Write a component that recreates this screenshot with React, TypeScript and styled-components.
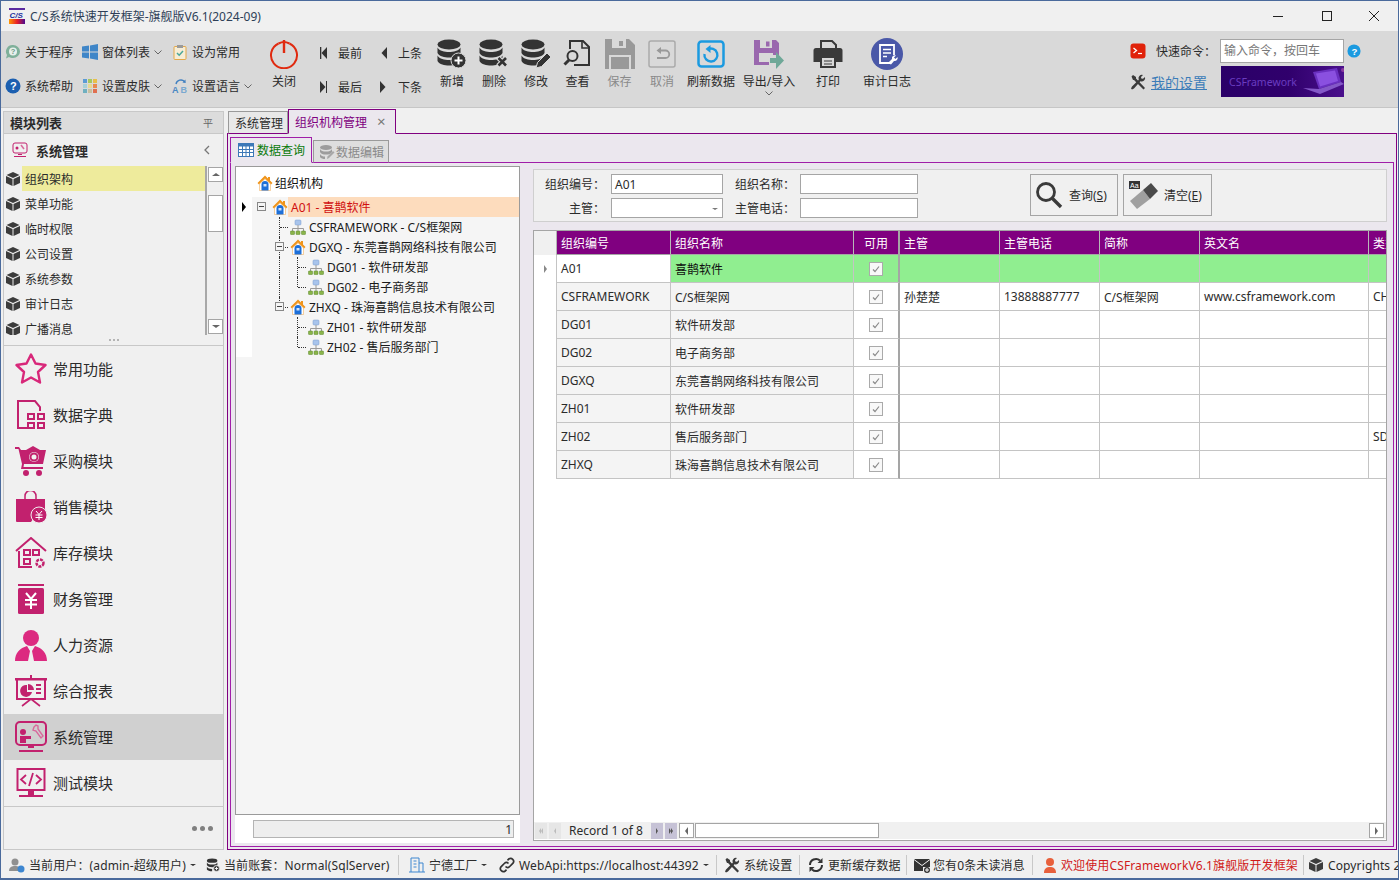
import React from "react";
import styled, { createGlobalStyle } from "styled-components";

const FONT = `"Noto Sans", "Noto Sans CJK SC", sans-serif`;
const PINK = "#c2216e";

const Global = createGlobalStyle`
  html, body { margin: 0; padding: 0; height: 100%; overflow: hidden; background: #f0f0f0; }
  body { font-family: ${FONT}; font-size: 12px; color: #2b2b2b; }
  * { box-sizing: border-box; }
`;

/* ---------- drawing helpers ---------- */
const I = styled.svg<{ $mr?: number }>`
  display: block;
  flex: none;
  margin-right: ${(p) => p.$mr ?? 0}px;
`;
type IP = { s?: number; mr?: number };
const Svg = ({ s = 16, mr, vb = 16, children }: IP & { vb?: number; children: React.ReactNode }) => (
  <I $mr={mr} width={s} height={s} viewBox={`0 0 ${vb} ${vb}`}>{children}</I>
);

const Logo = () => (
  <I width="16" height="16" viewBox="0 0 16 16" $mr={5}>
    <defs>
      <linearGradient id="lg" x1="0" x2="1" y1="0" y2="0">
        <stop offset="0" stopColor="#ff9a00" />
        <stop offset=".5" stopColor="#e8202a" />
        <stop offset="1" stopColor="#4a0a90" />
      </linearGradient>
    </defs>
    <rect x="0" y="0" width="16" height="2" fill="#5a2aa0" />
    <rect x="0" y="11" width="16" height="5" fill="url(#lg)" />
    <text x="0.5" y="10" fontSize="8" fontWeight="700" fontStyle="italic" fontFamily="Liberation Sans" fill="#1b2f9c">C/S</text>
  </I>
);
const BubbleHelp = (p: IP) => (
  <Svg {...p}>
    <path d="M8 1a7 6.500 0 0 1 0 13c-1.500 0-3-.4-4-1l-3 1.500 1-3.500A6.500 6.500 0 0 1 8 1z" fill="#7fb09a" />
    <circle cx="8" cy="7.500" r="4" fill="#e8f0ec" />
    <text x="5.800" y="10.300" fontSize="7.500" fontWeight="700" fill="#6a9a86" fontFamily="Liberation Sans">?</text>
  </Svg>
);
const Win = (p: IP) => (
  <Svg {...p}>
    <path d="M0 2.500 7 1.500v6H0zM8 1.400 16 0v7.500H8zM0 8.500h7v6L0 13.500zM8 8.500h8V16l-8-1.400z" fill="#3f86c8" />
  </Svg>
);
const Clip = (p: IP) => (
  <Svg {...p}>
    <rect x="2" y="2.500" width="12" height="13" rx="1" fill="#f6edd5" stroke="#e3a84a" />
    <rect x="5" y="1" width="6" height="3" fill="#9a9a9a" />
    <path d="m5 9 2.200 2.200L11 7" fill="none" stroke="#4aa79a" strokeWidth="1.500" />
  </Svg>
);
const HelpBlue = ({ c = "#1b5fb0", ...p }: IP & { c?: string }) => (
  <Svg {...p}>
    <circle cx="8" cy="8" r="7.500" fill={c} />
    <text x="5" y="12.300" fontSize="11" fontWeight="700" fill="#fff" fontFamily="Liberation Sans">?</text>
  </Svg>
);
const Skin = (p: IP) => (
  <Svg {...p}>
    {["#5b9bd5", "#a5c860", "#e8c04a", "#a8d0d8", "#e8d890", "#e88a50", "#70b0c0", "#c8c0a0", "#e07050"].map((c, i) => (
      <rect key={c} x={1 + (i % 3) * 5} y={1 + Math.floor(i / 3) * 5} width="4" height="4" fill={c} />
    ))}
  </Svg>
);
const Lang = (p: IP) => (
  <Svg {...p}>
    <path d="M4 6a5 5 0 0 1 8.500-2.500" fill="none" stroke="#3f7fc0" strokeWidth="1.400" />
    <path d="m13.500 1.500.2 3.500-3.300-.5z" fill="#3f7fc0" />
    <text x="0" y="15" fontSize="9" fontWeight="700" fill="#4a88c4" fontFamily="Liberation Sans">A</text>
    <text x="8.500" y="15" fontSize="9" fontWeight="700" fill="#7aa8d0" fontFamily="Liberation Sans">B</text>
  </Svg>
);
const Power = () => (
  <Svg s={30} vb={30}>
    <path d="M9.500 4.500a13 13 0 1 0 11 0" fill="none" stroke="#e02a10" strokeWidth="2" />
    <path d="M15 1v13" stroke="#e02a10" strokeWidth="2.400" />
    <path d="M9.500 4.500C11 3.800 13 3 15 3s4 .8 5.500 1.500" fill="none" stroke="#e02a10" strokeWidth="2" />
  </Svg>
);
const NavArrow = ({ dir, bar }: { dir: "l" | "r"; bar?: boolean }) => (
  <I width="7" height="12" viewBox="0 0 7 12">
    {dir === "l" ? <path d="M7 0v12L1.500 6z" fill="#333" /> : <path d="M0 0v12l5.500-6z" fill="#333" />}
    {bar && <rect x={dir === "l" ? 0 : 6} width="1.300" height="12" fill="#333" />}
  </I>
);
const Db = ({ children }: { children?: React.ReactNode }) => (
  <Svg s={30} vb={30}>
    <ellipse cx="12" cy="5.500" rx="11.500" ry="5" fill="#333" />
    <path d="M.5 8.500c2 3.500 7 4.500 11.500 4.500s9.500-1 11.500-4.500V14c-2 3.500-7 4.500-11.500 4.500S2.500 17.500.5 14z" fill="#333" />
    <path d="M.5 16.500c2 3.500 7 4.500 11.500 4.500s9.500-1 11.500-4.500V22c-2 3.500-7 4.500-11.500 4.500S2.500 25.500.5 22z" fill="#333" />
    {children}
  </Svg>
);
const DbAdd = () => (
  <Db>
    <circle cx="21.500" cy="21.500" r="7.500" fill="#333" stroke="#d9d9d9" />
    <path d="M21.500 17.500v8M17.500 21.500h8" stroke="#fff" strokeWidth="2" />
  </Db>
);
const DbDel = () => (
  <Db>
    <path d="m19 18.500 8.500 8.500M27.500 18.500 19 27" stroke="#d9d9d9" strokeWidth="5" />
    <path d="m19.500 19 7.500 7.500M27 19l-7.500 7.500" stroke="#333" strokeWidth="2.600" />
  </Db>
);
const DbEdit = () => (
  <Db>
    <path d="m15 29 1.500-5.500L26 14l4 4-9.500 9.500z" fill="#333" stroke="#d9d9d9" />
  </Db>
);
const View = () => (
  <Svg s={30} vb={30}>
    <path d="M7 10V2h13l6 6v18H11" fill="none" stroke="#333" strokeWidth="2" />
    <path d="M19 2v7h7" fill="none" stroke="#333" strokeWidth="1.600" />
    <circle cx="9.500" cy="17" r="5" fill="none" stroke="#333" strokeWidth="2" />
    <path d="m6 21-4.500 4.500" stroke="#333" strokeWidth="3" />
  </Svg>
);
const Save = () => (
  <Svg s={30} vb={30}>
    <path d="M0 0h24l6 6v24H0z" fill="#999" />
    <rect x="7" y="0" width="14" height="9" fill="#d9d9d9" />
    <rect x="14" y="2" width="4" height="5" fill="#999" />
    <rect x="4" y="16" width="22" height="14" fill="#d9d9d9" />
    <rect x="6" y="18" width="18" height="12" fill="#999" />
  </Svg>
);
const Undo = () => (
  <Svg s={28} vb={28}>
    <rect x="1" y="1" width="26" height="26" rx="2" fill="none" stroke="#aaa" strokeWidth="1.500" />
    <path d="M10 10.500h7.500a3.500 3.500 0 0 1 0 7.500H9" fill="none" stroke="#999" strokeWidth="1.800" />
    <path d="M13 7v7l-4.500-3.500z" fill="#999" />
  </Svg>
);
const Refresh = () => (
  <Svg s={28} vb={28}>
    <rect x="1.500" y="1.500" width="25" height="25" rx="3" fill="none" stroke="#1b9ae0" strokeWidth="2.500" />
    <path d="M10.500 9.500A6.500 6.500 0 1 1 7.500 14" fill="none" stroke="#1b9ae0" strokeWidth="2.400" />
    <path d="M13.500 5v8l-5-4z" fill="#1b9ae0" />
  </Svg>
);
const Export = () => (
  <Svg s={30} vb={30}>
    <path d="M0 1h22l3 3v12h-6v-2H5v9h10v3H0z" fill="#9a68ae" />
    <rect x="6" y="1" width="12" height="8" fill="#d9d9d9" />
    <rect x="12" y="2.500" width="3.500" height="5" fill="#9a68ae" />
    <path d="M16 19h6v-6l8 8.500-8 8.500v-6h-6z" fill="#6fa898" />
  </Svg>
);
const Printer = () => (
  <Svg s={30} vb={30}>
    <path d="M8 2h11l4 4v6H8z" fill="#d9d9d9" stroke="#3a3a3a" strokeWidth="2" />
    <path d="M3 9h24a2.500 2.500 0 0 1 2.500 2.500V23H23v-6H7v6H.5V11.500A2.500 2.500 0 0 1 3 9z" fill="#3a3a3a" />
    <path d="M8 18h14v10H8z" fill="#d9d9d9" stroke="#3a3a3a" strokeWidth="2" />
    <path d="M11 22h8M11 25h8" stroke="#3a3a3a" />
  </Svg>
);
const Audit = () => (
  <Svg s={32} vb={32}>
    <circle cx="16" cy="16" r="16" fill="#4a58a8" />
    <path d="M20 25H9V7h14v10" fill="none" stroke="#fff" strokeWidth="1.800" />
    <path d="M12 11.500h8M12 15h8M12 18.500h4" stroke="#fff" strokeWidth="1.500" />
    <path d="m17 25 4-4a3 3 0 0 1 4-3.500l-2 2 1.500 1.500 2-2a3 3 0 0 1-3.500 4l-3 3.500z" fill="#fff" />
  </Svg>
);
const Terminal = (p: IP) => (
  <Svg {...p}>
    <rect x=".5" y=".5" width="15" height="15" rx="3" fill="#e0220a" />
    <path d="m3.500 5 3 2.500-3 2.500" fill="none" stroke="#fff" strokeWidth="1.300" />
    <path d="M8 10.500h4" stroke="#fff" strokeWidth="1.200" />
  </Svg>
);
const Tools = ({ c = "#3a3a3a", ...p }: IP & { c?: string }) => (
  <Svg {...p}>
    <path d="m1.500 2.500 1.500-1.500 3 2 0 1.500 9 9.500-1.500 1.500-9.500-9.500H3z" fill={c} />
    <path d="M15 3a3.500 3.500 0 0 1-4.600 4.300L4 14.500 2 15.500l-1-1 1-2 6.800-6.700A3.500 3.500 0 0 1 13 1l-2 2 .3 1.500 1.700.3z" fill={c} />
  </Svg>
);
const Banner = styled.div`
  width: 123px;
  height: 31px;
  display: flex;
  align-items: center;
  justify-content: space-between;
  padding: 0 0 0 8px;
  overflow: hidden;
  color: #6a3cc0;
  font-size: 10.500px;
  background: linear-gradient(90deg, #2a0068 0%, #30006c 55%, #4a108c 100%);
`;
const Laptop = () => (
  <I width="50" height="31" viewBox="0 0 50 31">
    <path d="M16 6 40 2l4 14-22 7z" fill="#6a30c0" />
    <path d="M19 7.500 38 4.500l3 10.500-18 5.500z" fill="#8a50e0" />
    <path d="M6 22l16 1 22-7 3 2-24 10z" fill="#8458c8" />
    <circle cx="46" cy="4" r="2" fill="#8a3aa0" />
  </I>
);

/* sidebar icons */
const Cube = () => (
  <Svg s={14} vb={14}>
    <path d="M7 0 .5 3 7 6l6.500-3z" fill="#3c3c3c" />
    <path d="M0 4v7l6.500 3V7z" fill="#3c3c3c" />
    <path d="M14 4v7l-6.500 3V7z" fill="#3c3c3c" />
  </Svg>
);
const P = { fill: PINK };
const Star = () => (
  <Svg s={32} vb={32}>
    <path d="M16 1.500 20.500 10.500l10 1.500-7.500 7 2 10.500L16 24.500 7 29.500l2-10.500-7.500-7 10-1.500z" fill="none" stroke="#d8287a" strokeWidth="2.400" strokeLinejoin="round" />
  </Svg>
);
const DictIcon = () => (
  <Svg s={32} vb={32}>
    <path d="M12 29H3V2h17l5 6v4" fill="none" stroke={PINK} strokeWidth="2" />
    {[[13, 15], [23, 15], [13, 24], [23, 24]].map(([x, y]) => (
      <rect key={`${x}-${y}`} x={x} y={y} width="6" height="5" fill="none" stroke={PINK} strokeWidth="2" />
    ))}
  </Svg>
);
const Cart = () => (
  <Svg s={32} vb={32}>
    <path d="M0 2h4l2 3h25l-3 14H9l-.5 3H28v2H6l1-5L3.500 4H0z" {...P} />
    <path d="M11 5l7-4 7 4z" {...P} />
    <circle cx="19" cy="12" r="5" fill="#f0f0f0" />
    <circle cx="19" cy="12" r="3.500" fill="none" stroke={PINK} strokeWidth="2" />
    <circle cx="11" cy="28" r="3" {...P} />
    <circle cx="24" cy="28" r="3" {...P} />
  </Svg>
);
const Bag = () => (
  <Svg s={32} vb={32}>
    <path d="M1 8h29v14H22l-6 9H2a1 1 0 0 1-1-1z" {...P} />
    <path d="M10 8V5a5.500 5.500 0 0 1 11 0v3" fill="none" stroke={PINK} strokeWidth="1.500" />
    <circle cx="24" cy="24" r="8" {...P} stroke="#f0f0f0" />
    <path d="m21 20 3 3.500 3-3.500M20.500 24h7M20.500 26.500h7M24 23.500V29" stroke="#fff" fill="none" />
  </Svg>
);
const Store = () => (
  <Svg s={32} vb={32}>
    <path d="M1 14 16 1l15 13" fill="none" stroke={PINK} strokeWidth="2" />
    <path d="M4 14v16h13" fill="none" stroke={PINK} strokeWidth="2" />
    <rect x="9" y="13" width="6" height="5" fill="none" stroke={PINK} strokeWidth="2" />
    <rect x="18" y="13" width="6" height="5" fill="none" stroke={PINK} strokeWidth="2" />
    <rect x="9" y="22" width="6" height="5" fill="none" stroke={PINK} strokeWidth="2" />
    <circle cx="25" cy="26" r="3.500" fill="none" stroke={PINK} strokeWidth="2.500" strokeDasharray="3 1" />
  </Svg>
);
const Finance = () => (
  <Svg s={32} vb={32}>
    <rect x="3" y="1" width="26" height="2" {...P} />
    <rect x="3" y="5" width="26" height="26" rx="1.500" {...P} />
    <path d="m11 10 5 6 5-6M10 17h12M10 21.500h12M16 16v10" fill="none" stroke="#fff" strokeWidth="2" />
  </Svg>
);
const Person = () => (
  <Svg s={32} vb={32}>
    <circle cx="16" cy="9" r="8" fill="#dc2a80" />
    <path d="M0 32c0-8 5-13 12-15l3 5-2 10zM32 32c0-8-5-13-12-15l-3 5 2 10z" fill="#dc2a80" />
  </Svg>
);
const Report = () => (
  <Svg s={32} vb={32}>
    <path d="M15 0h2v3h-2zM0 3h32v2.500H0z" {...P} />
    <path d="M2 5v19h28V5" fill="none" stroke={PINK} strokeWidth="2" />
    <path d="M13 9v6h6a6 6 0 0 0-6-6zM12 10a6 6 0 1 0 5 7h-5z" {...P} />
    <path d="M21 10h5M21 14h5M21 18h5" stroke={PINK} strokeWidth="2" />
    <path d="m16 24-9 7M16 24l9 7" stroke={PINK} strokeWidth="1.600" />
  </Svg>
);
const SysAdmin = () => (
  <Svg s={32} vb={32}>
    <rect x="1" y="1" width="30" height="23" rx="4" fill="none" stroke={PINK} strokeWidth="2" />
    <path d="M13 25h6v2h-6zM4 29h24v2H4z" {...P} />
    <circle cx="8" cy="11" r="3" {...P} />
    <path d="M5 15h11v3H11v4H5z" {...P} />
    <path d="m19 6 2-2 2 1v3l5 7-2 2-5-7-3-1z" fill="none" stroke="#d86a9c" strokeWidth="1.400" />
  </Svg>
);
const Code = () => (
  <Svg s={32} vb={32}>
    <rect x="2.500" y="2" width="27" height="21" fill="none" stroke={PINK} strokeWidth="2" />
    <path d="M4 28h24v2H4zM13 24h6v4h-6z" {...P} />
    <path d="m11 8-5 4.500 5 4.500M21 8l5 4.500-5 4.500M18 6l-4 13" fill="none" stroke={PINK} strokeWidth="1.800" />
  </Svg>
);

/* tree icons */
const House = () => (
  <Svg s={16}>
    <path d="M8 .5 .5 8l1.500 1.500L8 3.500l6 6L15.500 8 13 5.500V2h-2v1.500z" fill="#f0941a" />
    <path d="M2.500 9v6.500h11V9L8 4z" fill="#fff" stroke="#f0b060" strokeWidth=".6" />
    <path d="M4.500 15.500V9.500a3.500 3.500 0 0 1 7 0v6z" fill="#1d6fd8" />
    <rect x="6.500" y="9" width="3" height="2.500" fill="#cfe2fa" />
  </Svg>
);
const Org = () => (
  <Svg s={16}>
    <rect x="5" y="1" width="6" height="5" rx="1" fill="#a8c4ec" stroke="#7a9ccc" strokeWidth=".5" />
    <path d="M8 6v3M2.500 12V9.500h11V12M8 9v3" stroke="#9a9a9a" fill="none" />
    {[0.5, 6, 11.5].map((x) => (
      <rect key={x} x={x} y="12" width="4" height="3.500" rx=".6" fill="#8ab44a" stroke="#5d8a2c" strokeWidth=".5" />
    ))}
  </Svg>
);

/* ---------- window frame ---------- */
const Window = styled.div`
  width: 1399px;
  height: 880px;
  display: flex;
  flex-direction: column;
  border: 1px solid #4a6a9c;
  border-bottom-width: 2px;
  background: #f0f0f0;
  overflow: hidden;
`;
const TitleBar = styled.div`
  height: 30px;
  flex: none;
  display: flex;
  align-items: center;
  padding-left: 8px;
  background: #f0f0f0;
`;
const TitleText = styled.span`
  font-size: 12px;
  color: #2e3f58;
  margin-right: auto;
`;
const WinBtn = styled.div`
  width: 48px;
  height: 30px;
  display: flex;
  align-items: center;
  justify-content: center;
`;
const WinBtns = styled.div`
  display: flex;
`;

/* ---------- toolbar ---------- */
const Toolbar = styled.div`
  height: 77px;
  flex: none;
  display: flex;
  padding: 4px 0 0 4px;
  background: #d9d9d9;
  border-bottom: 1px solid #c6c6c6;
`;
const SmallCol = styled.div<{ $w: number }>`
  width: ${(p) => p.$w}px;
  flex: none;
  display: flex;
  flex-direction: column;
`;
const SmallItem = styled.div`
  height: 34px;
  display: flex;
  align-items: center;
  white-space: nowrap;
  gap: 4px;
  font-size: 12px;
`;
const Chev = styled.svg`
  display: block;
  flex: none;
`;
const Chevron = () => (
  <Chev width="8" height="5" viewBox="0 0 8 5">
    <path d="m.5.5 3.500 3.500L7.500.5" fill="none" stroke="#666" />
  </Chev>
);
const NavCol = styled.div<{ $w: number; $pl: number }>`
  width: ${(p) => p.$w}px;
  padding-left: ${(p) => p.$pl}px;
  flex: none;
  display: flex;
  flex-direction: column;
`;
const NavItem = styled.div`
  height: 34px;
  display: flex;
  align-items: center;
  gap: 11px;
  font-size: 12px;
  padding-top: 1px;
`;
const BigBtn = styled.div<{ $w: number; $off?: boolean }>`
  width: ${(p) => p.$w}px;
  flex: none;
  display: flex;
  flex-direction: column;
  align-items: center;
  color: ${(p) => (p.$off ? "#8a8a8a" : "#2b2b2b")};
  font-size: 12px;
  white-space: nowrap;
`;
const BigIcon = styled.div`
  height: 32px;
  margin-top: 3px;
  display: flex;
  align-items: center;
  justify-content: center;
`;
const BigLabel = styled.div`
  margin-top: 3px;
  line-height: 18px;
`;
const ToolRight = styled.div`
  margin-left: auto;
  width: 268px;
  flex: none;
  display: flex;
  flex-direction: column;
`;
const ToolRightRow = styled.div`
  display: flex;
  align-items: center;
  height: 31px;
`;
const CmdLabel = styled.span`
  width: 64px;
  margin-left: 10px;
  font-size: 12px;
`;
const CmdInput = styled.div`
  width: 124px;
  height: 24px;
  border: 1px solid #a5a5a5;
  background: #fff;
  color: #777;
  font-size: 12px;
  padding-left: 3px;
  line-height: 21px;
  margin-right: 3px;
`;
const MyLink = styled.a`
  color: #3b7cb8;
  font-size: 14px;
  text-decoration: underline;
  margin-left: 5px;
  width: 70px;
  white-space: nowrap;
`;

/* ---------- body ---------- */
const Body = styled.div`
  flex: 1;
  min-height: 0;
  display: flex;
  padding: 3px 0 2px 2px;
`;
const Sidebar = styled.aside`
  width: 221px;
  flex: none;
  display: flex;
  flex-direction: column;
  border: 1px solid #c8c8c8;
  background: #f0f0f0;
`;
const SideHead = styled.div`
  height: 22px;
  flex: none;
  display: flex;
  align-items: center;
  justify-content: space-between;
  padding: 0 10px 0 6px;
  background: #dcdcdc;
  border-bottom: 1px solid #c8c8c8;
  font-size: 13px;
  font-weight: 700;
`;
const Pin = styled.span`
  font-size: 10px;
  font-weight: 400;
  color: #666;
`;
const GroupHead = styled.div`
  height: 32px;
  flex: none;
  display: flex;
  align-items: center;
  padding-left: 8px;
  font-size: 13px;
  font-weight: 700;
`;
const GroupTitle = styled.span`
  margin-left: 8px;
  margin-right: auto;
`;
const ChevBack = styled.svg`
  display: block;
  margin-right: 13px;
`;
const ListWrap = styled.div`
  height: 169px;
  flex: none;
  display: flex;
  overflow: hidden;
`;
const List = styled.div`
  width: 203px;
  flex: none;
  border-right: 2px solid #a8a8a8;
  overflow: hidden;
`;
const ListItem = styled.div`
  height: 25px;
  display: flex;
  align-items: center;
  padding-left: 2px;
  font-size: 12px;
`;
const ListText = styled.span<{ $on?: boolean }>`
  flex: 1;
  align-self: stretch;
  margin-left: 2px;
  padding-left: 3px;
  display: flex;
  align-items: center;
  background: ${(p) => (p.$on ? "#eeeb9c" : "transparent")};
`;
const VScroll = styled.div`
  width: 15px;
  margin-left: 1px;
  flex: none;
  display: flex;
  flex-direction: column;
  padding-top: 1px;
`;
const ScrollBtn = styled.div`
  width: 15px;
  height: 15px;
  flex: none;
  background: #fff;
  border: 1px solid #a5a5a5;
  display: flex;
  align-items: center;
  justify-content: center;
`;
const Tri = styled.div<{ $d: "u" | "d" | "l" | "r"; $c?: string; $s?: number }>`
  width: 0;
  height: 0;
  flex: none;
  ${(p) => {
    const s = p.$s ?? 3;
    const c = p.$c ?? "#666";
    const t = "transparent";
    if (p.$d === "u") return `border-left:${s + 1}px solid ${t};border-right:${s + 1}px solid ${t};border-bottom:${s}px solid ${c};`;
    if (p.$d === "d") return `border-left:${s + 1}px solid ${t};border-right:${s + 1}px solid ${t};border-top:${s}px solid ${c};`;
    if (p.$d === "l") return `border-top:${s + 1}px solid ${t};border-bottom:${s + 1}px solid ${t};border-right:${s}px solid ${c};`;
    return `border-top:${s + 1}px solid ${t};border-bottom:${s + 1}px solid ${t};border-left:${s}px solid ${c};`;
  }}
`;
const VThumb = styled.div`
  width: 15px;
  height: 37px;
  margin-top: 13px;
  margin-bottom: 87px;
  background: #fff;
  border: 1px solid #a5a5a5;
  flex: none;
`;
const Grip = styled.div`
  height: 11px;
  flex: none;
  display: flex;
  justify-content: center;
  align-items: center;
  gap: 2px;
  border-bottom: 1px solid #c8c8c8;
`;
const GripDot = styled.i`
  width: 2px;
  height: 2px;
  background: #b4b4b4;
`;
const NavItemBig = styled.div<{ $on?: boolean }>`
  height: 46px;
  flex: none;
  display: flex;
  align-items: center;
  padding: 0 0 1px 11px;
  gap: 6px;
  font-size: 15px;
  background: ${(p) => (p.$on ? "#d0d0d0" : "transparent")};
`;
const SideFoot = styled.div`
  flex: 1;
  display: flex;
  align-items: center;
  justify-content: flex-end;
  gap: 3px;
  padding-right: 10px;
  border-top: 1px solid #c8c8c8;
`;
const FootDot = styled.i`
  width: 5px;
  height: 5px;
  border-radius: 50%;
  background: #808080;
`;

/* ---------- main ---------- */
const Main = styled.main`
  flex: 1;
  min-width: 0;
  margin-left: 3px;
  margin-right: 1px;
  display: flex;
  flex-direction: column;
`;
const TabStrip = styled.div`
  height: 22px;
  flex: none;
  display: flex;
  align-items: flex-end;
  padding-left: 1px;
  position: relative;
  z-index: 1;
`;
const OuterTab = styled.div<{ $on?: boolean }>`
  height: ${(p) => (p.$on ? 25 : 23)}px;
  display: flex;
  align-items: center;
  padding: 0 ${(p) => (p.$on ? 9 : 4)}px 0 6px;
  margin-bottom: -1px;
  gap: 10px;
  font-size: 12px;
  color: ${(p) => (p.$on ? "#800080" : "#2b2b2b")};
  background: ${(p) => (p.$on ? "#ebe7ee" : "#e8e8e8")};
  border: 1px solid ${(p) => (p.$on ? "#800080" : "#9a9a9a")};
  border-bottom: ${(p) => (p.$on ? "1px solid #ebe7ee" : "1px solid #800080")};
`;
const TabClose = styled.span`
  color: #777;
  font-size: 15px;
  line-height: 15px;
`;
const Page = styled.div`
  flex: 1;
  min-height: 0;
  border: 1px solid #800080;
  padding: 2px;
  background: #ebe7ee;
  display: flex;
  flex-direction: column;
`;
const SubTabs = styled.div`
  height: 26px;
  flex: none;
  display: flex;
  align-items: flex-end;
  position: relative;
  z-index: 1;
`;
const SubTab = styled.div<{ $on?: boolean }>`
  height: ${(p) => (p.$on ? 26 : 23)}px;
  width: ${(p) => (p.$on ? 82 : 76)}px;
  margin-right: 1px;
  margin-bottom: -1px;
  display: flex;
  align-items: center;
  padding-left: ${(p) => (p.$on ? 7 : 5)}px;
  gap: ${(p) => (p.$on ? 3 : 1)}px;
  font-size: 12px;
  color: ${(p) => (p.$on ? "#0a7a0a" : "#8a8a8a")};
  background: ${(p) => (p.$on ? "#ebe7ee" : "#dedede")};
  border: 1px solid ${(p) => (p.$on ? "#a01ea8" : "#9a9a9a")};
  border-bottom: ${(p) => (p.$on ? "1px solid #ebe7ee" : "1px solid #a01ea8")};
`;
const Inner = styled.div`
  flex: 1;
  min-height: 0;
  display: flex;
  gap: 13px;
  border: 1px solid #a01ea8;
  padding: 3px 6px 3px 4px;
`;
const TreeCol = styled.div`
  width: 285px;
  flex: none;
  display: flex;
  flex-direction: column;
  background: #fff;
`;
const TreeBox = styled.div`
  flex: 1;
  min-height: 0;
  border: 1px solid #9a9a9a;
  background: #f5f5f5;
  overflow: hidden;
`;
const TreeRootRow = styled.div`
  height: 30px;
  display: flex;
  align-items: center;
  background: #fff;
  padding: 1px 0 0 21px;
  gap: 2px;
  font-size: 12px;
  color: #111;
`;
const TreeRow = styled.div`
  height: 20px;
  display: flex;
  align-items: center;
  font-size: 12px;
  color: #1a1a1a;
`;
const Strip = styled.div`
  width: 16px;
  align-self: stretch;
  flex: none;
  background: #fff;
  display: flex;
  align-items: center;
  justify-content: center;
`;
const Cell = styled.div<{ $line?: "full" | "half" | "none"; $stub?: boolean }>`
  width: 18px;
  height: 20px;
  flex: none;
  position: relative;
  &::before {
    content: "";
    position: absolute;
    left: 9px;
    top: 0;
    width: 0;
    height: ${(p) => (p.$line === "half" ? "10px" : p.$line === "full" ? "20px" : "0")};
    border-left: 1px dotted #333;
  }
  &::after {
    content: "";
    position: absolute;
    left: 10px;
    top: 10px;
    width: ${(p) => (p.$stub ? 8 : 0)}px;
    border-top: 1px dotted #333;
  }
`;
const Expander = styled.div`
  position: absolute;
  z-index: 1;
  left: 5px;
  top: 5px;
  width: 9px;
  height: 9px;
  background: #f4f4f4;
  border: 1px solid #888;
  display: flex;
  align-items: center;
  justify-content: center;
  &::before {
    content: "";
    width: 5px;
    height: 1px;
    background: #444;
  }
`;
const IconWrap = styled.div`
  margin-left: 2px;
  flex: none;
`;
const NodeLabel = styled.div<{ $on?: boolean }>`
  flex: 1;
  align-self: stretch;
  padding-left: 3px;
  display: flex;
  align-items: center;
  white-space: nowrap;
  color: ${(p) => (p.$on ? "#d01010" : "inherit")};
  background: ${(p) => (p.$on ? "#fddcbd" : "transparent")};
`;
const TreeFoot = styled.div`
  height: 28px;
  flex: none;
  padding: 5px 6px 5px 18px;
`;
const CountBox = styled.div`
  height: 18px;
  border: 1px solid #b4b4b4;
  background: #eeeeee;
  text-align: right;
  padding-right: 1px;
  font-size: 12px;
  line-height: 17px;
`;
const RightCol = styled.div`
  flex: 1;
  min-width: 0;
  display: flex;
  flex-direction: column;
  padding: 3px 0 2px;
`;
const Filter = styled.div`
  height: 53px;
  flex: none;
  display: flex;
  padding-top: 4px;
  border: 1px solid #cfcfcf;
  background: #f0f0f0;
  margin-bottom: 8px;
`;
const FilterGrid = styled.div`
  display: grid;
  grid-template-columns: 65px 112px 53px 118px;
  grid-auto-rows: 20px;
  column-gap: 12px;
  row-gap: 4px;
  flex: none;
`;
const FLabel = styled.label<{ $first?: boolean }>`
  text-align: right;
  font-size: 12px;
  line-height: 21px;
  white-space: nowrap;
  margin-right: ${(p) => (p.$first ? -6 : 0)}px;
`;
const FInput = styled.div`
  border: 1px solid #a5a5a5;
  background: #fff;
  padding: 1px 4px 0 3px;
  font-size: 12px;
  line-height: 18px;
  display: flex;
  align-items: center;
  justify-content: space-between;
`;
const FBtn = styled.div<{ $w: number; $ml: number }>`
  width: ${(p) => p.$w}px;
  margin-left: ${(p) => p.$ml}px;
  height: 42px;
  flex: none;
  border: 1px solid #a5a5a5;
  display: flex;
  align-items: center;
  padding-left: 4px;
  font-size: 12px;
  gap: 6px;
  background: #f0f0f0;
`;
const U = styled.span`
  text-decoration: underline;
`;
const Grid = styled.div`
  flex: 1;
  min-height: 0;
  border: 1px solid #a5a5a5;
  background: #fff;
  display: flex;
  flex-direction: column;
  overflow: hidden;
`;
const GridRows = styled.div`
  flex: 1;
  min-height: 0;
  overflow: hidden;
`;
const COLS = "23px 114px 183px 46px 100px 100px 100px 169px 80px";
const Row = styled.div<{ $h: number }>`
  display: grid;
  grid-template-columns: ${COLS};
  height: ${(p) => p.$h}px;
  width: 915px;
`;
const Corner = styled.div`
  background: #f0f0f0;
  border-right: 1px solid #b4b4b4;
`;
const Head = styled.div<{ $c?: boolean; $thick?: boolean }>`
  background: #800080;
  color: #fff;
  font-size: 12px;
  display: flex;
  align-items: center;
  white-space: nowrap;
  overflow: hidden;
  padding-left: ${(p) => (p.$c ? 0 : 4)}px;
  justify-content: ${(p) => (p.$c ? "center" : "flex-start")};
  border-right: ${(p) => (p.$thick ? "2px solid #a5a5a5" : "1px solid #b8b8b8")};
  border-bottom: 1px solid #a5a5a5;
`;
const Indicator = styled.div`
  background: #fff;
  display: flex;
  align-items: center;
  justify-content: center;
  border-right: 1px solid #c4c4c4;
`;
const Td = styled.div<{ $bg?: string; $c?: boolean; $thick?: boolean; $dark?: boolean }>`
  background: ${(p) => p.$bg ?? "#fff"};
  border-right: ${(p) => (p.$thick ? "2px solid #a5a5a5" : "1px solid #c4c4c4")};
  border-bottom: 1px solid #c4c4c4;
  display: flex;
  align-items: center;
  white-space: nowrap;
  overflow: hidden;
  font-size: 12px;
  padding-left: ${(p) => (p.$c ? 0 : 4)}px;
  color: ${(p) => (p.$dark ? "#111" : "#2b2b2b")};
  justify-content: ${(p) => (p.$c ? "center" : "flex-start")};
`;
const Check = styled.div`
  width: 14px;
  height: 14px;
  background: #f8f8f8;
  border: 1px solid #aaa;
  display: flex;
  align-items: center;
  justify-content: center;
`;
const GridFoot = styled.div`
  height: 17px;
  flex: none;
  background: #f0f0f0;
  display: flex;
  align-items: center;
  padding-left: 1px;
  margin-bottom: 1px;
`;
const PagerBtn = styled.div<{ $on?: boolean }>`
  width: 12px;
  height: 16px;
  margin-right: 2px;
  display: flex;
  align-items: center;
  justify-content: center;
  background: ${(p) => (p.$on ? "#c6c2d6" : "#e6e6e6")};
`;
const RecordText = styled.span`
  width: 88px;
  padding-left: 6px;
  font-size: 12px;
  white-space: nowrap;
  flex: none;
`;
const HScroll = styled.div`
  flex: 1;
  display: flex;
  height: 15px;
  margin-right: 2px;
`;
const HBtn = styled.div`
  width: 15px;
  height: 15px;
  flex: none;
  border: 1px solid #a5a5a5;
  background: #fff;
  display: flex;
  align-items: center;
  justify-content: center;
`;
const HThumb = styled.div`
  width: 184px;
  flex: none;
  margin-left: 1px;
  margin-right: auto;
  border: 1px solid #a5a5a5;
  background: #fff;
`;

/* ---------- status bar ---------- */
const Status = styled.footer`
  height: 26px;
  flex: none;
  display: flex;
  align-items: center;
  overflow: hidden;
  white-space: nowrap;
  font-size: 12px;
  letter-spacing: 0.12px;
  color: #2b2b2b;
  background: #f0f0f0;
`;
const SItem = styled.div<{ $w: number; $pl: number; $red?: boolean; $gap?: number }>`
  width: ${(p) => p.$w}px;
  padding-left: ${(p) => p.$pl}px;
  flex: none;
  display: flex;
  align-items: center;
  gap: ${(p) => p.$gap ?? 4}px;
  height: 100%;
  color: ${(p) => (p.$red ? "#d01a1a" : "inherit")};
`;
const SSep = styled.i`
  width: 1px;
  height: 20px;
  flex: none;
  background: #c8c8c8;
`;

/* ---------- data ---------- */
const nodes = [
  { t: "A01 - 喜鹊软件", lv: 0, on: true, exp: true },
  { t: "CSFRAMEWORK - C/S框架网", lv: 1, line: "full" as const },
  { t: "DGXQ - 东莞喜鹊网络科技有限公司", lv: 1, line: "full" as const, exp: true },
  { t: "DG01 - 软件研发部", lv: 2, outer: true, line: "full" as const },
  { t: "DG02 - 电子商务部", lv: 2, outer: true, line: "half" as const },
  { t: "ZHXQ - 珠海喜鹊信息技术有限公司", lv: 1, line: "half" as const, exp: true },
  { t: "ZH01 - 软件研发部", lv: 2, line: "full" as const },
  { t: "ZH02 - 售后服务部门", lv: 2, line: "half" as const },
];
const rows = [
  ["A01", "喜鹊软件", "", "", "", "", ""],
  ["CSFRAMEWORK", "C/S框架网", "孙楚楚", "13888887777", "C/S框架网", "www.csframework.com", "CHN"],
  ["DG01", "软件研发部", "", "", "", "", ""],
  ["DG02", "电子商务部", "", "", "", "", ""],
  ["DGXQ", "东莞喜鹊网络科技有限公司", "", "", "", "", ""],
  ["ZH01", "软件研发部", "", "", "", "", ""],
  ["ZH02", "售后服务部门", "", "", "", "", "SDX"],
  ["ZHXQ", "珠海喜鹊信息技术有限公司", "", "", "", "", ""],
];
const sideList = ["组织架构", "菜单功能", "临时权限", "公司设置", "系统参数", "审计日志", "广播消息"];
const sideNav: [string, React.ReactNode][] = [
  ["常用功能", <Star />],
  ["数据字典", <DictIcon />],
  ["采购模块", <Cart />],
  ["销售模块", <Bag />],
  ["库存模块", <Store />],
  ["财务管理", <Finance />],
  ["人力资源", <Person />],
  ["综合报表", <Report />],
  ["系统管理", <SysAdmin />],
  ["测试模块", <Code />],
];
const bigBtns: [string, React.ReactNode, number, boolean?][] = [
  ["新增", <DbAdd />, 42],
  ["删除", <DbDel />, 42],
  ["修改", <DbEdit />, 42],
  ["查看", <View />, 41],
  ["保存", <Save />, 43, true],
  ["取消", <Undo />, 42, true],
  ["刷新数据", <Refresh />, 56],
];

const MiniCaret = () => <Tri $d="d" $s={2} $c="#333" />;

export default function App() {
  return (
    <>
      <Global />
      <Window>
        <TitleBar>
          <Logo />
          <TitleText>C/S系统快速开发框架-旗舰版V6.1(2024-09)</TitleText>
          <WinBtns>
            <WinBtn>
              <Svg s={12} vb={12}><path d="M1 6.500h10" stroke="#222" /></Svg>
            </WinBtn>
            <WinBtn>
              <Svg s={12} vb={12}><rect x="2.500" y="1.500" width="9" height="9" fill="none" stroke="#222" /></Svg>
            </WinBtn>
            <WinBtn>
              <Svg s={12} vb={12}><path d="m1 1 10 10M11 1 1 11" stroke="#222" /></Svg>
            </WinBtn>
          </WinBtns>
        </TitleBar>

        <Toolbar>
          <SmallCol $w={77}>
            <SmallItem><BubbleHelp />关于程序</SmallItem>
            <SmallItem><HelpBlue />系统帮助</SmallItem>
          </SmallCol>
          <SmallCol $w={90}>
            <SmallItem><Win />窗体列表<Chevron /></SmallItem>
            <SmallItem><Skin />设置皮肤<Chevron /></SmallItem>
          </SmallCol>
          <SmallCol $w={92}>
            <SmallItem><Clip />设为常用</SmallItem>
            <SmallItem><Lang />设置语言<Chevron /></SmallItem>
          </SmallCol>
          <BigBtn $w={40}>
            <BigIcon><Power /></BigIcon>
            <BigLabel>关闭</BigLabel>
          </BigBtn>
          <NavCol $w={72} $pl={16}>
            <NavItem><NavArrow dir="l" bar />最前</NavItem>
            <NavItem><NavArrow dir="r" bar />最后</NavItem>
          </NavCol>
          <NavCol $w={55} $pl={4}>
            <NavItem><NavArrow dir="l" />上条</NavItem>
            <NavItem><NavArrow dir="r" />下条</NavItem>
          </NavCol>
          {bigBtns.map(([t, ic, w, off]) => (
            <BigBtn key={t} $w={w} $off={off}>
              <BigIcon>{ic}</BigIcon>
              <BigLabel>{t}</BigLabel>
            </BigBtn>
          ))}
          <BigBtn $w={60}>
            <BigIcon><Export /></BigIcon>
            <BigLabel>导出/导入</BigLabel>
            <Chevron />
          </BigBtn>
          <BigBtn $w={58}>
            <BigIcon><Printer /></BigIcon>
            <BigLabel>打印</BigLabel>
          </BigBtn>
          <BigBtn $w={60}>
            <BigIcon><Audit /></BigIcon>
            <BigLabel>审计日志</BigLabel>
          </BigBtn>
          <ToolRight>
            <ToolRightRow>
              <Terminal />
              <CmdLabel>快速命令：</CmdLabel>
              <CmdInput>输入命令，按回车</CmdInput>
              <HelpBlue s={14} c="#1b9ae0" />
            </ToolRightRow>
            <ToolRightRow>
              <Tools />
              <MyLink>我的设置</MyLink>
              <Banner>CSFramework<Laptop /></Banner>
            </ToolRightRow>
          </ToolRight>
        </Toolbar>

        <Body>
          <Sidebar>
            <SideHead>模块列表<Pin>平</Pin></SideHead>
            <GroupHead>
              <Svg s={16}>
                <rect x="1" y="1" width="14" height="10" rx="2" fill="none" stroke={PINK} />
                <path d="M6 12h4v1H6zM2 14h12v1H2z" fill={PINK} />
                <circle cx="5" cy="6" r="1.500" fill={PINK} />
                <path d="m9 3 3 4" stroke="#d86a9c" strokeWidth="1.500" />
              </Svg>
              <GroupTitle>系统管理</GroupTitle>
              <ChevBack width="6" height="10" viewBox="0 0 6 10">
                <path d="M5 1 1 5l4 4" fill="none" stroke="#777" strokeWidth="1.300" />
              </ChevBack>
            </GroupHead>
            <ListWrap>
              <List>
                {sideList.map((t, i) => (
                  <ListItem key={t}>
                    <Cube />
                    <ListText $on={i === 0}>{t}</ListText>
                  </ListItem>
                ))}
              </List>
              <VScroll>
                <ScrollBtn><Tri $d="u" /></ScrollBtn>
                <VThumb />
                <ScrollBtn><Tri $d="d" /></ScrollBtn>
              </VScroll>
            </ListWrap>
            <Grip><GripDot /><GripDot /><GripDot /></Grip>
            {sideNav.map(([t, ic]) => (
              <NavItemBig key={t} $on={t === "系统管理"}>{ic}{t}</NavItemBig>
            ))}
            <SideFoot><FootDot /><FootDot /><FootDot /></SideFoot>
          </Sidebar>

          <Main>
            <TabStrip>
              <OuterTab>系统管理</OuterTab>
              <OuterTab $on>组织机构管理<TabClose>×</TabClose></OuterTab>
            </TabStrip>
            <Page>
              <SubTabs>
                <SubTab $on>
                  <Svg>
                    <rect x=".5" y="1.500" width="15" height="13" fill="#fff" stroke="#3d78b8" />
                    <path d="M.5 4.500h15v-3H.5z" fill="#3d78b8" />
                    <path d="M.5 7.500h15M.5 10.500h15M4.500 1.500v13M8 1.500v13M11.500 1.500v13" stroke="#3d78b8" />
                  </Svg>
                  数据查询
                </SubTab>
                <SubTab>
                  <Svg>
                    <ellipse cx="7" cy="3.500" rx="6" ry="2.500" fill="#9c9c9c" />
                    <path d="M1 5c1 2 3 2.500 6 2.500S12 7 13 5v3c-1 2-3 2.500-6 2.500S2 10 1 8zM1 10c1 2 3 2.500 5 2.500V15c-2 0-4-.5-5-2z" fill="#9c9c9c" />
                    <path d="m8 15 .5-2.500L14 7l1.500 1.500-5.500 5.500z" fill="#a8a8a8" />
                  </Svg>
                  数据编辑
                </SubTab>
              </SubTabs>
              <Inner>
                <TreeCol>
                  <TreeBox>
                    <TreeRootRow><House />组织机构</TreeRootRow>
                    {nodes.map((n) => (
                      <TreeRow key={n.t}>
                        <Strip>{n.on && <Tri $d="r" $s={4} $c="#000" />}</Strip>
                        {n.lv >= 1 && <Cell />}
                        {n.lv === 2 && <Cell $line={n.outer ? "full" : "none"} />}
                        <Cell $line={n.lv === 0 ? "none" : n.line} $stub={n.lv > 0}>
                          {n.exp && <Expander />}
                        </Cell>
                        <IconWrap>{n.exp ? <House /> : <Org />}</IconWrap>
                        <NodeLabel $on={n.on}>{n.t}</NodeLabel>
                      </TreeRow>
                    ))}
                  </TreeBox>
                  <TreeFoot><CountBox>1</CountBox></TreeFoot>
                </TreeCol>

                <RightCol>
                  <Filter>
                    <FilterGrid>
                      <FLabel $first>组织编号：</FLabel>
                      <FInput>A01</FInput>
                      <FLabel>组织名称：</FLabel>
                      <FInput />
                      <FLabel $first>主管：</FLabel>
                      <FInput><span /><Tri $d="d" $s={2} $c="#777" /></FInput>
                      <FLabel>主管电话：</FLabel>
                      <FInput />
                    </FilterGrid>
                    <FBtn $w={88} $ml={112}>
                      <Svg s={28} vb={28}>
                        <circle cx="11" cy="11" r="8.500" fill="none" stroke="#3a3a3a" strokeWidth="2.800" />
                        <path d="m17 17 9 9" stroke="#3a3a3a" strokeWidth="3.400" />
                      </Svg>
                      <span>查询(<U>S</U>)</span>
                    </FBtn>
                    <FBtn $w={89} $ml={5}>
                      <Svg s={30} vb={30}>
                        <rect x="1" y="1" width="11" height="8" fill="#333" />
                        <text x="2" y="8" fontSize="7" fill="#fff" fontFamily="Liberation Sans">Aa</text>
                        <path d="M2 21 15 10l7 9-13 10z" fill="#a0a0a0" />
                        <path d="M15 10 23 3l7 8-8 8z" fill="#4a4a4a" />
                      </Svg>
                      <span>清空(<U>E</U>)</span>
                    </FBtn>
                  </Filter>
                  <Grid>
                    <GridRows>
                      <Row $h={24}>
                        <Corner />
                        <Head>组织编号</Head>
                        <Head>组织名称</Head>
                        <Head $c $thick>可用</Head>
                        <Head>主管</Head>
                        <Head>主管电话</Head>
                        <Head>简称</Head>
                        <Head>英文名</Head>
                        <Head>类型</Head>
                      </Row>
                      {rows.map((r, i) => {
                        const first = i === 0;
                        const green = "#90ee90";
                        return (
                          <Row key={r[0]} $h={28}>
                            <Indicator>{first && <Tri $d="r" $s={3} $c="#888" />}</Indicator>
                            <Td $bg={first ? "#fff" : "#f4f4f4"}>{r[0]}</Td>
                            <Td $bg={first ? green : "#f4f4f4"} $dark={first}>{r[1]}</Td>
                            <Td $c $thick $bg={first ? green : "#fff"}>
                              <Check>
                                <Svg s={10} vb={10}><path d="m2 5.500 2 2 4-5" fill="none" stroke="#8a8a8a" strokeWidth="1.200" /></Svg>
                              </Check>
                            </Td>
                            {r.slice(2).map((v, k) => (
                              <Td key={k} $bg={first ? green : "#fff"}>{v}</Td>
                            ))}
                          </Row>
                        );
                      })}
                    </GridRows>
                    <GridFoot>
                      <PagerBtn><Tri $d="l" $s={2} $c="#bbb" /><Tri $d="l" $s={2} $c="#bbb" /></PagerBtn>
                      <PagerBtn><Tri $d="l" $s={2} $c="#bbb" /></PagerBtn>
                      <RecordText>Record 1 of 8</RecordText>
                      <PagerBtn $on><Tri $d="r" $s={2} $c="#555" /></PagerBtn>
                      <PagerBtn $on><Tri $d="r" $s={2} $c="#555" /><Tri $d="r" $s={2} $c="#555" /></PagerBtn>
                      <HScroll>
                        <HBtn><Tri $d="l" $c="#666" /></HBtn>
                        <HThumb />
                        <HBtn><Tri $d="r" $c="#666" /></HBtn>
                      </HScroll>
                    </GridFoot>
                  </Grid>
                </RightCol>
              </Inner>
            </Page>
          </Main>
        </Body>

        <Status>
          <SItem $w={197} $pl={8}>
            <Svg>
              <circle cx="6" cy="5" r="3.500" fill="#909090" />
              <path d="M0 14c0-4 3-5 6-5s6 1 6 5z" fill="#909090" />
              <circle cx="12" cy="12" r="3.500" fill="#3d86d0" />
            </Svg>
            当前用户：(admin-超级用户)<MiniCaret />
          </SItem>
          <SItem $w={200} $pl={8}>
            <Svg s={14}>
              <ellipse cx="7" cy="3" rx="6" ry="2.500" fill="#333" />
              <path d="M1 5c1 2 3 2.500 6 2.500S12 7 13 5v3c-1 2-3 2.500-6 2.500S2 10 1 8zM1 10c1 2 3 2.500 6 2.500V15c-3 0-5-.5-6-2z" fill="#333" />
              <circle cx="12" cy="12" r="3.500" fill="#333" stroke="#f0f0f0" />
              <path d="M12 10v4M10 12h4" stroke="#fff" />
            </Svg>
            当前账套：Normal(SqlServer)
          </SItem>
          <SSep />
          <SItem $w={100} $pl={10}>
            <Svg>
              <path d="M2 15V1h8v14M10 6h4v9M0 15h16" fill="none" stroke="#3d86d0" />
              <path d="M4.500 4h3M4.500 7h3M4.500 10h3" stroke="#3d86d0" />
            </Svg>
            宁德工厂<MiniCaret />
          </SItem>
          <SItem $w={217} $pl={0}>
            <Svg>
              <path d="M6.500 9.500a3 3 0 0 0 4.200 0l3.300-3.300a3 3 0 0 0-4.200-4.200L8.500 3.300M9.500 6.500a3 3 0 0 0-4.200 0L2 9.800A3 3 0 0 0 6.200 14l1.300-1.300" fill="none" stroke="#333" strokeWidth="1.700" />
            </Svg>
            WebApi:https://localhost:44392<MiniCaret />
          </SItem>
          <SSep />
          <SItem $w={82} $pl={7}><Tools />系统设置</SItem>
          <SSep />
          <SItem $w={106} $pl={8}>
            <Svg>
              <path d="M2 8a6 6 0 0 1 10-4.500M14 8a6 6 0 0 1-10 4.500" fill="none" stroke="#333" strokeWidth="2" />
              <path d="M14.500 1v5h-5zM1.500 15v-5h5z" fill="#333" />
            </Svg>
            更新缓存数据
          </SItem>
          <SSep />
          <SItem $w={125} $pl={7} $gap={3}>
            <Svg>
              <path d="M0 2h16v8H9v4H0z" fill="#333" />
              <path d="m0 2.500 8 6 8-6" fill="none" stroke="#f0f0f0" />
              <circle cx="13" cy="13" r="3" fill="#333" />
              <path d="M13 11v4M11 13h4" stroke="#fff" />
            </Svg>
            您有0条未读消息
          </SItem>
          <SSep />
          <SItem $w={270} $pl={9} $red $gap={3}>
            <Svg>
              <circle cx="8" cy="5" r="4" fill="#e8603c" />
              <path d="M2 16c0-5 3-6 6-6s6 1 6 6z" fill="#e8603c" />
            </Svg>
            欢迎使用CSFrameworkV6.1旗舰版开发框架
          </SItem>
          <SSep />
          <SItem $w={120} $pl={5} $gap={5}><Cube />Copyrights 2024</SItem>
        </Status>
      </Window>
    </>
  );
}
